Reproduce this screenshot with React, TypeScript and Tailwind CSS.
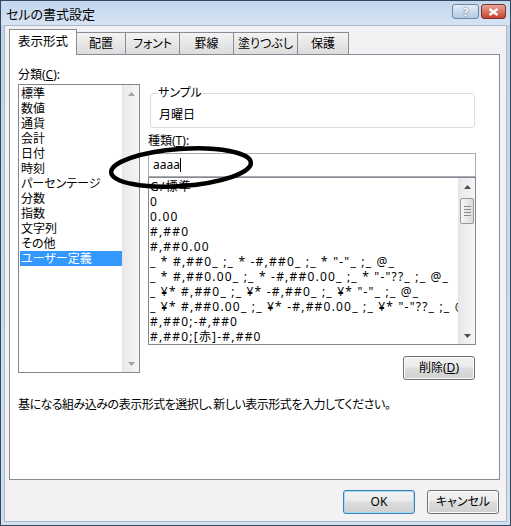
import React from "react";

const categories = [
  "標準",
  "数値",
  "通貨",
  "会計",
  "日付",
  "時刻",
  "パーセンテージ",
  "分数",
  "指数",
  "文字列",
  "その他",
  "ユーザー定義",
];

const formats = [
  "G/標準",
  "0",
  "0.00",
  "#,##0",
  "#,##0.00",
  '_ * #,##0_ ;_ * -#,##0_ ;_ * "-"_ ;_ @_',
  '_ * #,##0.00_ ;_ * -#,##0.00_ ;_ * "-"??_ ;_ @_',
  '_ ¥* #,##0_ ;_ ¥* -#,##0_ ;_ ¥* "-"_ ;_ @_',
  '_ ¥* #,##0.00_ ;_ ¥* -#,##0.00_ ;_ ¥* "-"??_ ;_ @_',
  "#,##0;-#,##0",
  "#,##0;[赤]-#,##0",
];

const tabs = [
  { label: "配置", w: "w-[50px]" },
  { label: "フォント", w: "w-[55px]" },
  { label: "罫線", w: "w-[55px]" },
  { label: "塗りつぶし", w: "w-[65px]" },
  { label: "保護", w: "w-[52px]" },
];

function Arrow({ up, dim }: { up?: boolean; dim?: boolean }) {
  return (
    <svg width="7" height="4" viewBox="0 0 7 4">
      <path
        d={up ? "M0 4 L3.5 0 L7 4 Z" : "M0 0 L3.5 4 L7 0 Z"}
        fill={dim ? "#a3a3a3" : "#4d4d4d"}
      />
    </svg>
  );
}

function ScrollBar({ thumb }: { thumb?: boolean }) {
  return (
    <div className="w-[17px] flex flex-col border-l border-[#e3e3e3] bg-gradient-to-r from-[#e9e9eb] to-[#f6f6f7]">
      <div className="h-[17px] flex items-center justify-center">
        <Arrow up dim={!thumb} />
      </div>
      {thumb && (
        <div className="mx-[1px] mt-[3px] h-[26px] rounded-[2px] border border-[#979797] bg-gradient-to-r from-[#f6f6f6] to-[#dadada] flex flex-col items-center justify-center gap-[2px]">
          <div className="w-[7px] h-px bg-[#8a8a8a]" />
          <div className="w-[7px] h-px bg-[#8a8a8a]" />
          <div className="w-[7px] h-px bg-[#8a8a8a]" />
          <div className="w-[7px] h-px bg-[#8a8a8a]" />
        </div>
      )}
      <div className="flex-1" />
      <div className="h-[17px] flex items-center justify-center">
        <Arrow dim={!thumb} />
      </div>
    </div>
  );
}

function Button({
  children,
  primary,
}: {
  children: React.ReactNode;
  primary?: boolean;
}) {
  return (
    <button
      className={
        "h-[24px] w-[72px] rounded-[3px] border text-[12px] leading-none bg-[linear-gradient(#f2f2f2_0%,#ebebeb_45%,#dddddd_50%,#cfcfcf_100%)] " +
        (primary
          ? "border-[#3c7fb1] shadow-[inset_0_0_0_1px_#9fdcf8]"
          : "border-[#707070] shadow-[inset_0_0_0_1px_#fbfbfb]")
      }
    >
      {children}
    </button>
  );
}

export default function App() {
  return (
    <div className="relative w-[511px] h-[526px] flex flex-col bg-gradient-to-b from-[#bfd3eb] to-[#d1e0f1] border border-[#33475d] text-[12px] text-black font-['Noto_Sans','Noto_Sans_CJK_JP',sans-serif] [font-feature-settings:'palt']">
      {/* title bar */}
      <div className="h-[24px] flex justify-between pl-[5px] pr-[4px] bg-gradient-to-b from-[#c2d6ee] to-[#d7e4f4]">
        <div className="text-[13px] leading-[24px] pt-[1px]">セルの書式設定</div>
        <div className="flex gap-[2px] pt-[3px]">
          <div className="w-[27px] h-[15px] rounded-[3px] border border-[#7088a6] bg-gradient-to-b from-[#e3edf8] to-[#b4c9e3] flex items-center justify-center text-[11px] font-bold leading-none text-white [text-shadow:0_0_2px_#32465f]">
            ?
          </div>
          <div className="w-[25px] h-[15px] rounded-[3px] border border-[#78352b] bg-gradient-to-b from-[#e8a397] to-[#c4422f] flex items-center justify-center">
            <svg width="11" height="8" viewBox="0 0 11 8">
              <path d="M1.5 1 L9.5 7 M9.5 1 L1.5 7" stroke="#fff" strokeWidth="2.2" />
            </svg>
          </div>
        </div>
      </div>

      {/* client area */}
      <div className="flex-1 mx-[3px] mb-[3px] bg-[#f4f1f4] border border-[#a9b9cc] pl-[4px] pt-[2px] flex flex-col">
        {/* tabs */}
        <div className="flex items-end h-[26px]">
          <div className="relative z-10 w-[68px] h-[26px] -mb-px bg-white border border-b-0 border-[#898c95] flex items-center justify-center text-[12.5px]">
            表示形式
          </div>
          {tabs.map((t) => (
            <div
              key={t.label}
              className={
                t.w +
                " h-[22px] -ml-px border border-b-0 border-[#898c95] bg-gradient-to-b from-[#f3f3f3] to-[#dcdcdc] flex items-center justify-center"
              }
            >
              {t.label}
            </div>
          ))}
        </div>

        {/* panel */}
        <div className="w-[491px] h-[426px] border border-[#898c95] bg-white px-[8px] pt-[10px]">
          <div className="flex gap-[8px]">
            <div className="w-[122px]">
              <div className="h-[19px] leading-[19px]">
                分類(<span className="underline">C</span>):
              </div>
              <div className="h-[289px] border border-[#828790] flex">
                <div className="flex-1 pt-[1px] pl-[1px]">
                  {categories.map((c, i) => (
                    <div
                      key={c}
                      className={
                        "h-[15px] leading-[15px] pl-[1px] whitespace-nowrap " +
                        (i === categories.length - 1
                          ? "bg-[#3399ff] text-white"
                          : "")
                      }
                    >
                      {c}
                    </div>
                  ))}
                </div>
                <ScrollBar />
              </div>
            </div>

            <div className="w-[328px] flex flex-col">
              <fieldset className="mt-[21px] ml-[2px] mr-[1px] h-[42px] border border-[#d5dfe5] rounded-[3px] pl-[8px]">
                <legend className="leading-[14px] -ml-[1px] pr-[1px]">サンプル</legend>
                <div className="leading-[14px] pt-[8px]">月曜日</div>
              </fieldset>
              <div className="mt-[5px] h-[16px] leading-[16px]">
                種類(<span className="underline">T</span>):
              </div>
              <div className="mt-[4px] h-[24px] border border-[#abadb3] flex items-center pl-[4px]">
                <span className="leading-none">aaaa</span>
                <span className="w-px h-[14px] bg-black" />
              </div>
              <div className="h-[168px] border border-[#828790] flex">
                <div className="flex-1 pt-[1px] pl-[1px] overflow-hidden tracking-[1.2px]">
                  {formats.map((f) => (
                    <div key={f} className="h-[15px] leading-[15px] whitespace-pre overflow-hidden">
                      {f}
                    </div>
                  ))}
                </div>
                <ScrollBar thumb />
              </div>
              <div className="mt-[11px] mr-[1px] flex justify-end">
                <Button>
                  削除(<span className="underline">D</span>)
                </Button>
              </div>
            </div>
          </div>
          <div className="mt-[17px] h-[16px] leading-[16px] whitespace-nowrap tracking-[-0.5px]">
            基になる組み込みの表示形式を選択し、新しい表示形式を入力してください。
          </div>
        </div>

        {/* dialog buttons */}
        <div className="w-[491px] mt-[10px] pr-[1px] flex justify-end gap-[12px]">
          <Button primary>OK</Button>
          <Button>キャンセル</Button>
        </div>
      </div>

      {/* hand-drawn annotation */}
      <svg
        className="absolute left-[105px] top-[143px] pointer-events-none"
        width="152"
        height="48"
        viewBox="0 0 152 48"
      >
        <ellipse
          cx="75"
          cy="23.5"
          rx="70"
          ry="18.5"
          transform="rotate(-4 75 23.5)"
          fill="none"
          stroke="#000"
          strokeWidth="4.5"
        />
      </svg>
    </div>
  );
}
